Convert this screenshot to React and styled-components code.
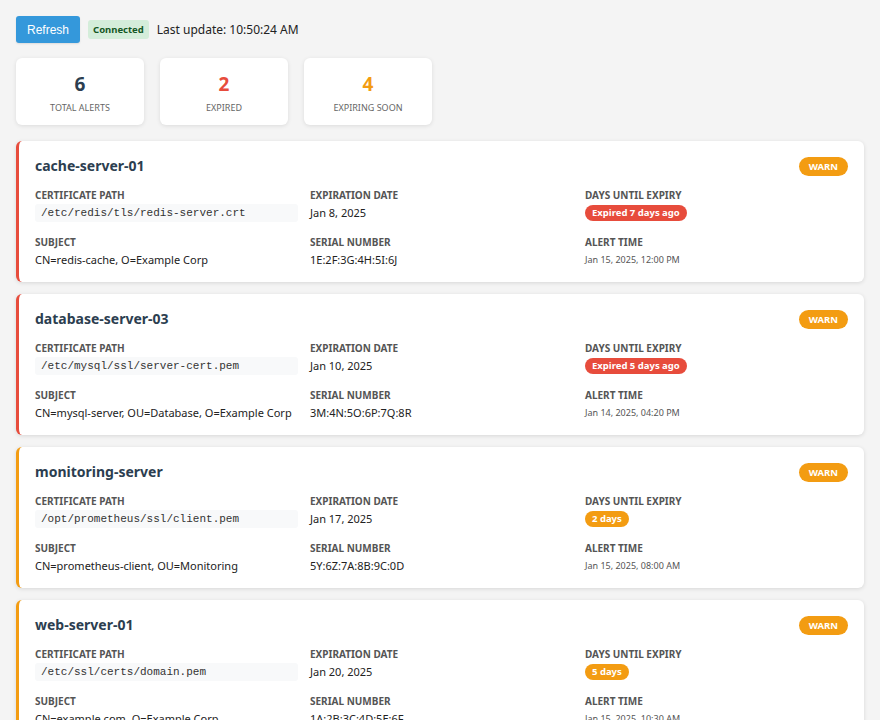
import React from "react";
import styled, { createGlobalStyle } from "styled-components";

const Global = createGlobalStyle`
  html, body { margin: 0; padding: 0; overflow: hidden; }
  body {
    background: #f4f4f4;
    font-family: "Noto Sans", "Open Sans", sans-serif;
    color: #333;
  }
`;

const Page = styled.div`
  padding: 16px;
  display: flex;
  flex-direction: column;
`;

const Toolbar = styled.div`
  display: flex;
  align-items: center;
  gap: 8px;
  margin-bottom: 15px;
`;

const Button = styled.button`
  background: #3498db;
  color: #fff;
  border: none;
  border-radius: 3px;
  height: 27px;
  padding: 0 11px;
  font-family: "Liberation Sans", Arial, sans-serif;
  font-size: 12px;
  box-shadow: 0 1px 2px rgba(0,0,0,0.1);
`;

const Status = styled.span`
  background: #d4edda;
  color: #155724;
  font-size: 9.5px;
  font-weight: 700;
  padding: 3px 5px;
  border-radius: 3px;
  line-height: 13px;
`;

const Updated = styled.span`
  font-size: 12px;
  color: #222;
`;

const Stats = styled.div`
  display: flex;
  gap: 16px;
  margin-bottom: 16px;
`;

const StatCard = styled.div`
  width: 128px;
  height: 67px;
  background: #fff;
  border-radius: 6px;
  box-shadow: 0 1px 4px rgba(0,0,0,0.1);
  display: flex;
  flex-direction: column;
  align-items: center;
  justify-content: center;
  gap: 5px;
`;

const StatNum = styled.div`
  font-size: 19px;
  font-weight: 700;
  line-height: 24px;
  margin-top: 3px;
  color: ${p => p.$color};
`;

const StatLabel = styled.div`
  font-size: 9px;
  color: #666;
  text-transform: uppercase;
  line-height: 13px;
`;

const List = styled.div`
  display: flex;
  flex-direction: column;
  gap: 12px;
`;

const Card = styled.div`
  background: #fff;
  border-radius: 6px;
  border-left: 3px solid ${p => p.$color};
  box-shadow: 0 1px 4px rgba(0,0,0,0.12);
  padding: 15px 16px 13px 16px;
`;

const CardHead = styled.div`
  display: flex;
  align-items: center;
  justify-content: space-between;
  margin-bottom: 12px;
`;

const Host = styled.h3`
  margin: 0;
  font-size: 14px;
  font-weight: 700;
  color: #2c3e50;
  line-height: 20px;
`;

const Level = styled.span`
  background: #f39c12;
  color: #fff;
  font-size: 9.5px;
  font-weight: 700;
  border-radius: 10px;
  padding: 3px 10px;
  line-height: 13px;
`;

const Grid = styled.div`
  display: grid;
  grid-template-columns: repeat(3, 1fr);
  column-gap: 12px;
  row-gap: 13px;
`;

const Field = styled.div`
  display: flex;
  flex-direction: column;
  align-items: flex-start;
  gap: 2px;
`;

const Label = styled.div`
  font-size: 10px;
  font-weight: 700;
  color: #555;
  text-transform: uppercase;
  line-height: 14px;
`;

const Value = styled.div`
  font-size: ${p => (p.$small ? "9px" : "11px")};
  color: ${p => (p.$small ? "#555" : "#222")};
  line-height: 18px;
`;

const Path = styled.code`
  align-self: stretch;
  background: #f8f9fa;
  border-radius: 3px;
  padding: 0 6px;
  font-family: "Liberation Mono", "Courier New", monospace;
  font-size: 11px;
  line-height: 18px;
  color: #333;
`;

const Pill = styled.span`
  background: ${p => p.$color};
  color: #fff;
  font-size: 9.5px;
  font-weight: 700;
  border-radius: 9px;
  padding: 1px 7px;
  line-height: 14px;
  margin-top: 1px;
`;

const RED = "#e74c3c";
const ORANGE = "#f39c12";

const alerts = [
  { host: "cache-server-01", path: "/etc/redis/tls/redis-server.crt", exp: "Jan 8, 2025", days: "Expired 7 days ago", expired: true, subject: "CN=redis-cache, O=Example Corp", serial: "1E:2F:3G:4H:5I:6J", time: "Jan 15, 2025, 12:00 PM" },
  { host: "database-server-03", path: "/etc/mysql/ssl/server-cert.pem", exp: "Jan 10, 2025", days: "Expired 5 days ago", expired: true, subject: "CN=mysql-server, OU=Database, O=Example Corp", serial: "3M:4N:5O:6P:7Q:8R", time: "Jan 14, 2025, 04:20 PM" },
  { host: "monitoring-server", path: "/opt/prometheus/ssl/client.pem", exp: "Jan 17, 2025", days: "2 days", expired: false, subject: "CN=prometheus-client, OU=Monitoring", serial: "5Y:6Z:7A:8B:9C:0D", time: "Jan 15, 2025, 08:00 AM" },
  { host: "web-server-01", path: "/etc/ssl/certs/domain.pem", exp: "Jan 20, 2025", days: "5 days", expired: false, subject: "CN=example.com, O=Example Corp", serial: "1A:2B:3C:4D:5E:6F", time: "Jan 15, 2025, 10:30 AM" },
];

export default function App() {
  return (
    <Page>
      <Global />
      <Toolbar>
        <Button>Refresh</Button>
        <Status>Connected</Status>
        <Updated>Last update: 10:50:24 AM</Updated>
      </Toolbar>
      <Stats>
        <StatCard><StatNum $color="#2c3e50">6</StatNum><StatLabel>Total Alerts</StatLabel></StatCard>
        <StatCard><StatNum $color={RED}>2</StatNum><StatLabel>Expired</StatLabel></StatCard>
        <StatCard><StatNum $color={ORANGE}>4</StatNum><StatLabel>Expiring Soon</StatLabel></StatCard>
      </Stats>
      <List>
        {alerts.map(a => (
          <Card key={a.host} $color={a.expired ? RED : ORANGE}>
            <CardHead>
              <Host>{a.host}</Host>
              <Level>WARN</Level>
            </CardHead>
            <Grid>
              <Field><Label>Certificate Path</Label><Path>{a.path}</Path></Field>
              <Field><Label>Expiration Date</Label><Value>{a.exp}</Value></Field>
              <Field><Label>Days Until Expiry</Label><Pill $color={a.expired ? RED : ORANGE}>{a.days}</Pill></Field>
              <Field><Label>Subject</Label><Value>{a.subject}</Value></Field>
              <Field><Label>Serial Number</Label><Value>{a.serial}</Value></Field>
              <Field><Label>Alert Time</Label><Value $small>{a.time}</Value></Field>
            </Grid>
          </Card>
        ))}
      </List>
    </Page>
  );
}
